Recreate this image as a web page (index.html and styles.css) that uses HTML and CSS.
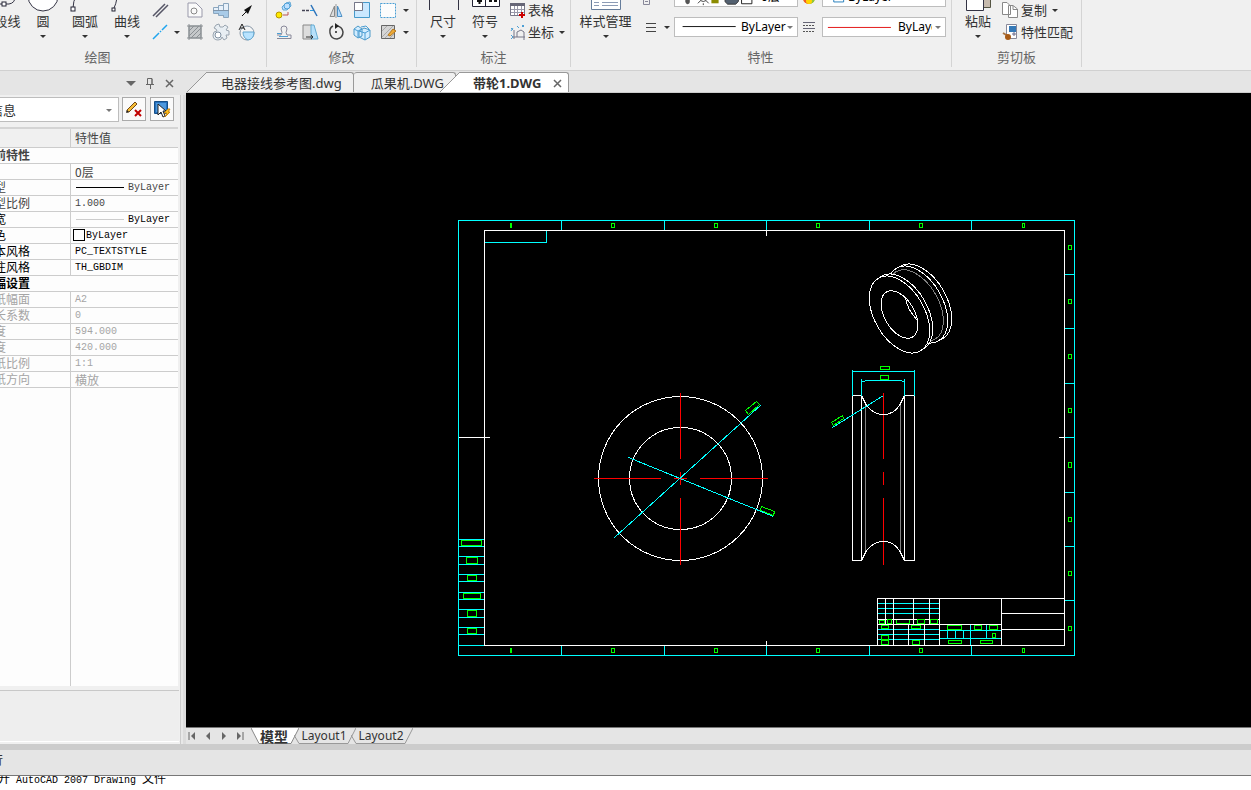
FILE: index.html
```html
<!DOCTYPE html>
<html lang="zh-CN">
<head>
<meta charset="utf-8">
<title>带轮1.DWG</title>
<link rel="stylesheet" href="styles.css">
</head>
<body>
<header class="ribbon">
  <section class="group group-draw">
    <div class="tools">
      <button class="big plain"><svg class="big-icon" viewBox="0 0 32 32"><path d="M2 24H24Q30 23 30 17" class="ink"/><rect x="17" y="22" width="4" height="4" class="node"/></svg><span>多段线</span></button>
      <button class="big"><svg class="big-icon" viewBox="0 0 32 32"><circle cx="16" cy="16" r="15" fill="#fff" stroke="#334"/></svg><span>圆</span><i class="caret"></i></button>
      <button class="big"><svg class="big-icon" viewBox="0 0 32 32"><path d="M4 28Q4 14 18 6" class="ink"/><rect x="2" y="27" width="4" height="4" class="node"/></svg><span>圆弧</span><i class="caret"></i></button>
      <button class="big"><svg class="big-icon" viewBox="0 0 32 32"><path d="M3 28Q7 20 6 8" class="ink"/><rect x="1" y="28" width="3" height="3" class="node"/></svg><span>曲线</span><i class="caret"></i></button>
      <div class="grid grid-draw">
        <button class="tool" aria-label="平行线"><svg viewBox="0 0 18 18"><path d="M2 15L14 3M5 16L17 4" stroke="#556" stroke-width="1.5"/></svg></button>
        <span></span>
        <button class="tool" aria-label="面域"><svg viewBox="0 0 18 18"><path d="M2 2H10L16 8V16H2Z" fill="#fafafa" stroke="#99a"/><circle cx="8" cy="10" r="3" class="grayline"/></svg></button>
        <button class="tool" aria-label="螺栓"><svg viewBox="0 0 18 18"><path d="M1.500 6.500H6.500V12.500H1.500ZM6.500 4.500H11.500V14.500H6.500ZM11.500 2.500H16.500V16.500H11.500Z" fill="#e8f1fa" stroke="#8ba6be"/><path d="M2 10H16V16H12V14H7V12H2Z" fill="#a9cbe8"/><path d="M1 9.500H17" stroke="#8095aa"/></svg></button>
        <button class="tool" aria-label="箭头"><svg viewBox="0 0 18 18"><path d="M4 15L10 9" stroke="#111"/><path d="M14 4L6 9L10 13Z" fill="#111"/></svg></button>
        <button class="tool" aria-label="直线"><svg viewBox="0 0 18 18"><path d="M2 16L8 10M9 9L10 8M11 7L16 2" stroke="#20a5ee" stroke-width="1.5"/></svg></button>
        <button class="more" aria-label="更多直线"><i class="caret"></i></button>
        <button class="tool" aria-label="填充"><svg viewBox="0 0 18 18"><path d="M3 3H15V15H3Z" fill="#c5c8ca" stroke="#858b90"/><path d="M1 3H17M1 15H17M3 1V17M15 1V17M3 8L8 3M3 13L13 3M5 15L15 5M10 15L15 10" stroke="#8b9094"/></svg></button>
        <button class="tool" aria-label="齿轮"><svg viewBox="0 0 18 18"><path d="M4 2L7 1L8 4L11 4L13 2L16 4L14 7L17 8V12H14L15 15L12 17L10 14Q10 17 6 17Q1 17 1 12L2 9L5 8L4 6L2 5Z" fill="#e8eef3" stroke="#9aa5b0"/><circle cx="6" cy="12" r="3" fill="#fff" stroke="#8090a0"/></svg></button>
        <button class="tool" aria-label="局部放大"><svg viewBox="0 0 18 18"><circle cx="9" cy="10" r="7" fill="#f5f5f5" stroke="#8796a5"/><path d="M5 9H16Q16 16 10 17Q5 15 5 9Z" fill="#b8e3ff" stroke="#62a7d0"/><path d="M1 7L4 1L7 7M2 5H6" stroke="#222"/></svg></button>
      </div>
    </div>
    <h2>绘图</h2>
  </section>
  <section class="group group-modify">
    <div class="tools">
      <div class="grid grid-modify">
        <button class="tool" aria-label="复制对象"><svg viewBox="0 0 18 18"><path d="M7 6L11 2L15 1L16 5L12 9L8 9Z" fill="#bddfff" stroke="#62a7d5"/><circle cx="12" cy="5" r="3" class="blueline"/><circle cx="4" cy="14" r="3" fill="#ffea00" stroke="#b59500"/><path d="M8 14H13V11" stroke="#b55"/></svg></button>
        <button class="tool" aria-label="延伸"><svg viewBox="0 0 18 18"><path d="M1 9.500H4M5 9.500H8" stroke="#445" stroke-width="1.5"/><path d="M9 9.500H13" stroke="#2b9ae0"/><path d="M10 4L16 15" stroke="#2b73bb" stroke-width="1.5"/></svg></button>
        <button class="tool" aria-label="镜像"><svg viewBox="0 0 18 18"><path d="M7.500 5V15.500H3Z" fill="#ddd" stroke="#888"/><path d="M10.500 5V15.500H15Z" fill="#b7dcff" stroke="#4e91c5"/><path d="M9 3V17" stroke="#999"/></svg></button>
        <button class="tool" aria-label="缩放"><svg viewBox="0 0 18 18"><path d="M1.500 1.500H16.500V16.500H1.500Z" fill="#cae8ff" stroke="#469acb"/><path d="M1.500 1.500H9.500V9.500H1.500Z" fill="#fff" stroke="#778"/></svg></button>
        <button class="tool" aria-label="选择框"><svg viewBox="0 0 18 18"><path d="M1.500 2.500H16.500V16.500H1.500Z" fill="#fcfcfc" stroke="#4a9fd4" stroke-dasharray="2 1"/></svg></button>
        <button class="more" aria-label="更多选择"><i class="caret"></i></button>
        <button class="tool" aria-label="偏移"><svg viewBox="0 0 18 18"><path d="M2 15.500H16V12H12Q10 10 12 6Q12 3 9 3Q6 3 6 6Q8 10 6 12H2" stroke="#889"/><path d="M2 10.500H6M4 13.500H13" class="blueline"/></svg></button>
        <button class="tool" aria-label="拉伸"><svg viewBox="0 0 18 18"><path d="M2 2H11V16H2Z" fill="#ddd" stroke="#888"/><path d="M10 2H13L17 16H10Z" fill="#b6e0fa" stroke="#64acd3"/><path d="M5 14H12M10 12L12 14L10 16" stroke="#333"/></svg></button>
        <button class="tool" aria-label="旋转"><svg viewBox="0 0 18 18"><path d="M6 3Q2 5 3 10Q4 16 10 16Q16 15 16 9Q15 3 9 3" stroke="#444" stroke-width="1.5"/><path d="M8 0L12 3L8 6Z" fill="#222"/><circle cx="9" cy="9" r="1" fill="#222"/></svg></button>
        <button class="tool" aria-label="阵列"><svg viewBox="0 0 18 18"><path d="M1 6L5 3L9 6V13L5 15L1 12ZM6 8L11 5L17 7V14L12 17L6 14Z" fill="#d3edff" stroke="#4c99c8"/><path d="M1 6L5 8V15M5 8L9 6M6 8L12 10V17M12 10L17 7M8 4L13 3L16 6" class="blueline"/></svg></button>
        <button class="tool" aria-label="编辑填充"><svg viewBox="0 0 18 18"><path d="M2.500 2.500H15.500V15.500H2.500Z" fill="#d5d5d5" stroke="#666"/><path d="M3 8L8 3M3 14L14 3M6 15L15 6M11 15L15 11" stroke="#aaa"/><path d="M9 12L14 6L17 8L11 13Z" fill="#eeaa35" stroke="#b47820"/></svg></button>
        <button class="more" aria-label="更多编辑"><i class="caret"></i></button>
      </div>
    </div>
    <h2>修改</h2>
  </section>
  <section class="group group-note">
    <div class="tools">
      <button class="big"><svg class="big-icon" viewBox="0 0 32 32"><path d="M2.500 2V30M31.500 2V30M3 14H31" class="ink"/></svg><span>尺寸</span><i class="caret"></i></button>
      <button class="big"><svg class="big-icon" viewBox="0 0 32 32"><path d="M3.500 4.500H30.500V26.500H3.500ZM16.500 5V26" fill="#fff" stroke="#223"/><path d="M8 21H13M10.500 19V24M20 21H23M25 21H28" stroke="#111" stroke-width="2"/></svg><span>符号</span><i class="caret"></i></button>
      <div class="grid grid-note">
        <button class="wide"><svg viewBox="0 0 18 18"><path d="M1.500 2.500H15.500V14.500H1.500Z" fill="#fff" stroke="#778"/><path d="M1 2H16V5H1Z" fill="#667"/><path d="M2 8.500H15M2 11.500H15M5.500 5V14M8.500 5V14M12.500 5V14" stroke="#99a"/><path d="M10 14H16M13 11V17" stroke="#c00" stroke-width="2"/></svg><span>表格</span></button>
        <button class="wide"><svg viewBox="0 0 18 18"><path d="M5 16V7M3 14H16M8 14V9L12 7L15 9V17" stroke="#778"/><path d="M2 5L4 7M4 5L2 8M8 3L10 5M13 2L15 4M15 2L13 4M2 12L4 14L2 16" class="blueline"/></svg><span>坐标</span><i class="caret"></i></button>
      </div>
    </div>
    <h2>标注</h2>
  </section>
  <section class="group group-props">
    <div class="tools">
      <button class="big style-btn"><svg class="big-icon" viewBox="0 0 32 32"><path d="M1.500 2.500H30.500V29.500H1.500Z" fill="#fff" stroke="#667d9b"/><path d="M4 22.500H9M12 22.500H28M4 25.500H9M12 25.500H28" stroke="#8c9bb5"/></svg><span>样式管理</span><i class="caret"></i></button>
      <div class="props">
        <span class="mark"><svg viewBox="0 0 18 18"><path d="M2.500 4.500H8.500V16.500H2.500ZM4 11.500H7M4 13.500H7" stroke="#889"/></svg></span>
        <span></span>
        <div class="combo"><svg class="layer-mark" viewBox="0 0 80 20"><path d="M7 4H12V15Q12 18 9 18Q7 17 7 15Z" fill="#555"/><path d="M21 17L24 14M33 17L30 14M27 17V19" stroke="#333"/><circle cx="27" cy="11" r="4" fill="#fff" stroke="#333"/><path d="M36 9H44V17H36Z" fill="#8b8b00"/><path d="M52 9H66V15L63 18H54L51 15Z" fill="#536070" stroke="#333"/><path d="M69.500 5.500H81V17.500H69.500Z" fill="#fff" stroke="#111"/></svg><select class="layer-select" aria-label="图层"><option>0层</option></select></div>
        <span class="mark"><svg viewBox="0 0 18 18"><circle cx="8" cy="10" r="6" fill="#e8be22"/><path d="M2 10A6 6 0 0 0 8 16V10Z" fill="#f05a28"/><path d="M8 16A6 6 0 0 0 14 10H8Z" fill="#8dc63f"/><circle cx="8" cy="13" r="3" fill="#ffd400"/></svg></span>
        <div class="combo"><svg class="line-mark" viewBox="0 0 80 20"><path d="M7.500 6.500H18.500V15.500H7.500Z" fill="#fff" stroke="#1675b8"/></svg><select class="color-select" aria-label="颜色"><option>ByLayer</option></select></div>
        <span class="mark"><svg viewBox="0 0 18 18"><path d="M5 5.500H15M5 9.500H15M5 13.500H15" stroke="#444"/></svg></span>
        <i class="caret"></i>
        <div class="combo"><svg class="line-mark" viewBox="0 0 80 20"><path d="M4 9.500H63" stroke="#000"/></svg><select class="linetype-select" aria-label="线型"><option>ByLayer</option></select></div>
        <span class="mark"><svg viewBox="0 0 18 18"><path d="M2 4.500H14M2 10.500H14" stroke="#667"/><path d="M2 7.500H14M2 13.500H14" stroke="#555" stroke-dasharray="2 1"/></svg></span>
        <div class="combo"><svg class="line-mark" viewBox="0 0 80 20"><path d="M1 10.500H71" stroke="#e00000"/></svg><select class="weight-select" aria-label="线宽"><option>ByLayer</option></select></div>
      </div>
    </div>
    <h2>特性</h2>
  </section>
  <section class="group group-clip">
    <div class="tools">
      <button class="big"><svg class="big-icon" viewBox="0 0 32 32"><path d="M15.500 3.500H28.500V27.500H15.500Z" fill="#c7bbae" stroke="#554"/><path d="M4.500 7.500H21.500V30.500H4.500Z" fill="#fff" stroke="#334"/></svg><span>粘贴</span><i class="caret"></i></button>
      <div class="grid grid-note">
        <button class="wide"><svg viewBox="0 0 18 18"><path d="M.5 1.500H5L8.500 5V13.500H.5ZM6.500 4.500H11L15.500 8V16.500H6.500Z" fill="#fff" stroke="#888"/><path d="M11 5V8.500H15" class="grayline"/></svg><span>复制</span><i class="caret"></i></button>
        <button class="wide"><svg viewBox="0 0 18 18"><path d="M4.500 1.500H14.500V15.500H4.500Z" fill="#fff" stroke="#889"/><path d="M7 3H14V9H7Z" fill="#3579b7"/><path d="M10 11H14M12 9V13" stroke="#668"/><path d="M1 10L6 13" stroke="#a87543" stroke-width="2"/><circle cx="6" cy="14" r="3" fill="#a85b16"/></svg><span>特性匹配</span></button>
      </div>
    </div>
    <h2>剪切板</h2>
  </section>
</header>

<main class="workspace">
  <aside class="panel">
    <div class="panel-bar">
      <button aria-label="菜单"><svg viewBox="0 0 12 12"><path d="M1 4H11L6 9Z" fill="#666"/></svg></button>
      <button aria-label="固定"><svg viewBox="0 0 12 12"><path d="M3.500 7V1.500H8V7M2 7.500H10M6.500 8V12M8 2V7" stroke="#666"/></svg></button>
      <button aria-label="关闭面板"><svg viewBox="0 0 12 12"><path d="M3 3L10 10M10 3L3 10" stroke="#666" stroke-width="1.500"/></svg></button>
    </div>
    <div class="panel-search">
      <div class="combo object-combo"><select aria-label="对象"><option>默认信息</option></select></div>
      <button class="square" aria-label="清除选择"><svg viewBox="0 0 18 18"><path d="M2 10L10 2L12 4L4 12L2 12Z" fill="#f6bd36" stroke="#704919"/><path d="M1 13L2 10L4 12Z" fill="#222"/><path d="M10 10L16 16M16 10L10 16" stroke="#c00000" stroke-width="2"/></svg></button>
      <button class="square" aria-label="快速选择"><svg viewBox="0 0 18 18"><path d="M1.500 1.500H14.500V13.500H1.500Z" fill="#2671bd" stroke="#174f87"/><path d="M3 3H13V12H3Z" fill="#4d98dd"/><path d="M5 4V15L8 12L10 17L12 16L10 11H13Z" fill="#fff" stroke="#222"/><path d="M15 9L11 13H14L12 17L17 12H15L17 9Z" fill="#ffc31c" stroke="#c98510"/></svg></button>
    </div>
    <div class="sheet">
      <table>
        <thead><tr><th>特性名</th><th>特性值</th></tr></thead>
        <tbody>
          <tr class="section"><th colspan="2">当前特性</th></tr>
          <tr><td>层</td><td class="cn">0层</td></tr>
          <tr><td>线型</td><td><span class="sample"><i class="rule"></i>ByLayer</span></td></tr>
          <tr><td>线型比例</td><td>1.000</td></tr>
          <tr class="strong"><td>线宽</td><td><span class="sample"><i class="rule pale"></i>ByLayer</span></td></tr>
          <tr class="strong"><td>颜色</td><td class="swatch-cell"><i class="swatch"></i>ByLayer</td></tr>
          <tr class="strong"><td>文本风格</td><td>PC_TEXTSTYLE</td></tr>
          <tr class="strong"><td>标注风格</td><td>TH_GBDIM</td></tr>
          <tr class="section strong"><th colspan="2">图幅设置</th></tr>
          <tr class="dim"><td>图纸幅面</td><td>A2</td></tr>
          <tr class="dim"><td>加长系数</td><td>0</td></tr>
          <tr class="dim"><td>宽度</td><td>594.000</td></tr>
          <tr class="dim"><td>高度</td><td>420.000</td></tr>
          <tr class="dim"><td>图纸比例</td><td>1:1</td></tr>
          <tr class="dim"><td>图纸方向</td><td class="cn">横放</td></tr>
        </tbody>
      </table>
      <div class="sheet-rest"></div>
    </div>
    <div class="hint"></div>
  </aside>

  <section class="document">
    <nav class="doc-tabs">
      <button class="doc-tab first"><svg class="slant" viewBox="0 0 20 20"><path d="M0 20L20 0V20Z" fill="#f0f0f0"/><path d="M0 20L20 0" stroke="#999"/></svg><span>电器接线参考图.dwg</span></button>
      <button class="doc-tab second"><span>瓜果机.DWG</span></button>
      <button class="doc-tab active"><svg class="slant" viewBox="0 0 20 20"><path d="M0 20L20 0V20Z" fill="#fff"/><path d="M0 20L20 0" stroke="#999"/></svg><span>带轮1.DWG<svg class="close" viewBox="0 0 10 10"><path d="M1 2L8 9M8 2L1 9" stroke="#666" stroke-width="1.500"/></svg></span></button>
    </nav>
    <div class="canvas">
      <svg viewBox="186 93 1065 634" shape-rendering="crispEdges">
        <g transform="translate(.5 .5)">
          <g class="cyan">
            <path d="M458 220H1074V655H458ZM561 220V230M664 220V230M766 220V230M869 220V230M971 220V230M561 645V655M664 645V655M766 645V655M869 645V655M971 645V655"/>
            <path d="M1064 274H1074M1064 328H1074M1064 383H1074M1064 437H1074M1064 492H1074M1064 546H1074M1064 600H1074"/>
            <path d="M458 539H484M458 546H484M458 556H484M458 564H484M458 574H484M458 581H484M458 592H484M458 599H484M458 609H484M458 617H484M458 627H484M458 634H484M458 645H484M484 242H546V230"/>
            <path d="M877 603H939M877 608H939M877 613H939M877 629H939M877 634H939M877 639H939M939 630H1001M939 638H1001M947 630V638M955 630V638M963 630V638M970 624V645M986 624V638"/>
          </g>
          <path class="white" d="M484 230H1064V645H484ZM766 230V235M766 640V645M458 437H489M1058 437H1064M877 645V598H1064M885 598V624M893 598V645M913 598V624M929 598V624M939 598V645M1001 598V645M908 624V645M924 624V645M877 619H939M877 624H1001M1001 613H1064M1001 629H1064"/>
          <g class="green">
            <path d="M510 223H511V227H510ZM611 223H614V227H611ZM714 223H717V227H714ZM816 223H819V227H816ZM919 223H922V227H919ZM1022 223H1024V227H1022Z"/>
            <path d="M510 648H511V652H510ZM611 648H614V652H611ZM714 648H717V652H714ZM816 648H819V652H816ZM919 648H922V652H919ZM1022 648H1024V652H1022Z"/>
            <path d="M1068 245H1071V249H1068ZM1068 299H1071V303H1068ZM1068 354H1071V358H1068ZM1068 408H1071V412H1068ZM1068 462H1071V467H1068ZM1068 517H1071V521H1068ZM1068 571H1071V575H1068ZM1068 626H1071V630H1068Z"/>
            <path d="M461 540H481V545H461ZM466 557H477V563H466ZM467 575H476V580H467ZM463 593H480V598H463ZM467 610H476V616H467ZM467 628H476V633H467Z"/>
            <path d="M879 620H884V623H879ZM887 619H891V623H887ZM896 619V623H909V619M917 619H924V623H917ZM930 619H937V623H930ZM881 625H888V628H881ZM911 625H920V628H911ZM881 635H888V639H881ZM881 640H888V644H881ZM912 640H919V644H912Z"/>
            <path d="M947 625H961V629H947ZM974 625H981V629H974ZM989 625H997V629H989ZM992 633H995V637H992ZM948 640H961V643H948ZM980 640H992V643H980Z"/>
            <path d="M880 366H889V369H880ZM880 375H888V379H880ZM745 410L756 401L759 404L748 414ZM761 506L774 511L773 515L760 510ZM831 422L842 415L843 418L833 425Z"/>
          </g>
          <circle class="white" cx="680" cy="478" r="82"/>
          <circle class="white" cx="680" cy="478" r="51"/>
          <path class="red" d="M680 392V458M680 471V484M680 497V564M593 478H660M673 478H686M699 478H767"/>
          <path class="cyan" d="M614 537L761 404M628 457L773 516"/>
          <path class="dark" d="M865 402V553M900 402V553"/>
          <path class="red" d="M883 392V458M883 471V484M883 497V564"/>
          <path class="white" d="M852 395H861V560H852ZM904 395H914V560H904ZM861 395L866 405Q873 414 883 414Q893 414 899 405L904 395M861 560L866 550Q873 541 883 541Q893 541 899 550L904 560"/>
          <path class="cyan" d="M852 369V395M914 369V395M852 371H914M861 378V395M904 378V395M861 381H864M864 380H901M901 381H904M883 395L832 427"/>
          <g class="solid">
            <ellipse rx="42" ry="25" transform="translate(921 302) rotate(60)"/>
            <ellipse rx="42" ry="25" transform="translate(917 304) rotate(60)"/>
            <ellipse class="dim-edge" rx="39" ry="23" transform="translate(915 305) rotate(60)"/>
            <ellipse rx="42" ry="25" transform="translate(902 312) rotate(60)"/>
            <ellipse rx="42" ry="25" transform="translate(899 314) rotate(60)"/>
            <ellipse rx="26" ry="15" transform="translate(899 314) rotate(60)"/>
            <path d="M905 297Q906 308 917 320"/>
          </g>
        </g>
      </svg>
    </div>
    <nav class="layout-tabs">
      <button class="step" aria-label="第一个"><svg viewBox="0 0 10 10"><path d="M2 1V9" stroke="#666"/><path d="M8 1V9L4 5Z" fill="#666"/></svg></button>
      <button class="step" aria-label="上一个"><svg viewBox="0 0 10 10"><path d="M7 1V9L3 5Z" fill="#666"/></svg></button>
      <button class="step" aria-label="下一个"><svg viewBox="0 0 10 10"><path d="M3 1V9L7 5Z" fill="#666"/></svg></button>
      <button class="step" aria-label="最后一个"><svg viewBox="0 0 10 10"><path d="M8 1V9" stroke="#666"/><path d="M2 1V9L6 5Z" fill="#666"/></svg></button>
      <button class="sheet-tab current"><svg viewBox="0 0 48 16" preserveAspectRatio="none"><path d="M0 0L8 15.500H40L48 0" fill="#fff" stroke="#888"/></svg><span>模型</span></button>
      <button class="sheet-tab"><svg viewBox="0 0 62 16" preserveAspectRatio="none"><path d="M0 7L5 15.500H54L62 0" stroke="#999"/></svg><span>Layout1</span></button>
      <button class="sheet-tab"><svg viewBox="0 0 62 16" preserveAspectRatio="none"><path d="M0 7L5 15.500H54L62 0" stroke="#999"/></svg><span>Layout2</span></button>
    </nav>
  </section>
</main>

<footer class="command">
  <div class="command-bar"><span>命令行</span></div>
  <div class="command-log"><p><span>打开</span> AutoCAD 2007 Drawing <span>文件</span></p></div>
</footer>
</body>
</html>
```
FILE: styles.css
```css
* { box-sizing: border-box; }
body {
  margin: 0;
  height: 100vh;
  display: flex;
  flex-direction: column;
  overflow: hidden;
  background: #e5e5e5;
  color: #333;
  font: 13px/18px "Noto Sans", "Noto Sans CJK SC", sans-serif;
}
button, select {
  margin: 0;
  padding: 0;
  border: 0;
  background: none;
  color: inherit;
  font: inherit;
}
svg { display: block; fill: none; }
.caret {
  border: 3px solid transparent;
  border-top-color: #333;
  border-bottom: 0;
  width: 6px;
  height: 3px;
}

.ribbon {
  display: flex;
  align-items: flex-end;
  flex: none;
  height: 71px;
  overflow: hidden;
  background: #f0f0f0;
  border-bottom: 1px solid #d0d0d0;
}
.group {
  flex: none;
  margin-bottom: 3px;
  border-right: 1px solid #d4d4d4;
}
.group h2 {
  margin: 4px 0 0;
  font-size: 13px;
  font-weight: 400;
  line-height: 20px;
  text-align: center;
  color: #666;
}
.tools { display: flex; align-items: flex-end; }
.group-draw { margin-left: -71px; }
.group-draw .tools { padding: 0 6px 0 51px; }
.group-modify .tools { padding: 0 5px 0 4px; }
.group-note { padding: 0 5px; }
.group-props { padding: 0 5px 0 4px; }
.group-clip .tools { padding: 0 8px 0 5px; }
.big {
  display: flex;
  flex-direction: column;
  align-items: center;
  width: 42px;
  height: 63px;
  white-space: nowrap;
}
.big .caret { margin-top: 5px; }
.big.plain { justify-content: flex-start; }
.big-icon { width: 32px; height: 32px; flex: none; }
.style-btn { width: 61px; }
.ink { stroke: #334; }
.node { fill: #fff; stroke: #223; }
.grayline { stroke: #888; }
.blueline { stroke: #4c9fd5; }
.grid { display: grid; grid-auto-rows: 22px; align-items: center; }
.grid-draw { grid-template-columns: 24px 10px 26px 26px 26px; }
.grid-modify { grid-template-columns: repeat(5, 26px) 10px; }
.grid-note { padding-left: 3px; }
.tool { display: grid; place-items: center; }
.tool svg, .wide svg, .mark svg { width: 18px; height: 18px; }
.more { display: grid; place-items: center; }
.wide { display: flex; align-items: center; gap: 1px; white-space: nowrap; }
.wide .caret { margin-left: 4px; }
.props {
  display: grid;
  grid-template-columns: 28px 10px 124px 24px 124px;
  grid-auto-rows: 20px;
  row-gap: 10px;
  align-items: center;
  padding-bottom: 6px;
}
.mark { display: grid; place-items: center; }

.combo {
  position: relative;
  height: 20px;
  border: 1px solid #bdbdbd;
  background: #fff;
}
.combo::after {
  content: "";
  position: absolute;
  right: 4px;
  top: 8px;
  border: 3px solid transparent;
  border-top-color: #777;
  border-bottom: 0;
}
.combo > svg { position: absolute; left: 0; top: 0; width: 80px; height: 18px; }
.combo select {
  appearance: none;
  display: block;
  width: 100%;
  height: 100%;
  padding: 0 10px 0 66px;
  font-size: 12px;
  color: #000;
}
.combo .layer-select { padding-left: 86px; }
.combo .color-select { padding-left: 25px; }
.combo .weight-select { padding-left: 75px; padding-right: 13px; }

.workspace { display: flex; flex: 1; min-height: 0; }
.panel {
  display: flex;
  flex-direction: column;
  flex: none;
  width: 186px;
  padding: 0 6px 2px 0;
  overflow: hidden;
  background: linear-gradient(to left, #dcdcdc 3px, #e8e8e8 3px, #e8e8e8 5px, #ccc 5px, #ccc 6px, #f0f0f0 6px);
}
.panel-bar {
  display: flex;
  justify-content: flex-end;
  align-items: center;
  gap: 7px;
  height: 24px;
  margin-right: -6px;
  padding-right: 11px;
  background: #e5e5e5;
}
.panel-bar svg { width: 12px; height: 12px; }
.panel-search {
  display: flex;
  align-items: flex-start;
  gap: 4px;
  height: 32px;
  padding: 2px 6px 0 0;
}
.object-combo { flex: 1; height: 25px; margin: 0 -1px 0 -40px; }
.object-combo::after { top: 11px; right: 6px; }
.object-combo select { padding: 0 14px 0 3px; font-size: 13px; color: #333; }
.square {
  display: grid;
  place-items: center;
  width: 24px;
  height: 24px;
  border: 1px solid #aaa;
  background: #fafafa;
}
.square svg { width: 18px; height: 18px; }
.sheet {
  display: flex;
  flex-direction: column;
  flex: 1;
  margin-left: -40px;
  margin-right: 2px;
  border-top: 2px solid #d4d4d4;
  background: #fdfdfd;
}
.panel table {
  width: 100%;
  table-layout: fixed;
  border-collapse: separate;
  border-spacing: 0;
  font-size: 12px;
  line-height: 15px;
  color: #444;
}
.panel td, .panel tbody th {
  height: 16px;
  padding: 0 0 0 22px;
  border-bottom: 1px solid #ccc;
  text-align: left;
  white-space: nowrap;
}
.panel thead th {
  height: 19px;
  padding: 0 0 0 4px;
  background: #f0f0f0;
  border-bottom: 1px solid #ccc;
  font-weight: 400;
  text-align: left;
}
.panel th:first-child { width: 111px; }
.panel td:first-child, .panel thead th:first-child { border-right: 1px solid #ccc; }
.panel td + td {
  padding-left: 4px;
  font-family: "Liberation Mono", "Noto Sans CJK SC", monospace;
  font-size: 10px;
}
.panel td.cn { font-family: "Noto Sans CJK SC", sans-serif; font-size: 12px; line-height: 14px; }
.panel .strong { color: #000; }
.panel .dim { color: #a5a5a5; }
.sample { display: flex; align-items: center; gap: 4px; padding-left: 1px; }
.rule { width: 48px; height: 1px; background: #000; }
.rule.pale { background: #ccc; }
.panel td.swatch-cell { padding-left: 2px; }
.swatch {
  display: inline-block;
  width: 12px;
  height: 12px;
  margin-right: 1px;
  border: 1px solid #000;
  background: #fff;
  vertical-align: middle;
}
.sheet-rest { flex: 1; width: 111px; border-right: 1px solid #ccc; }
.hint {
  height: 56px;
  margin-right: 1px;
  border-top: 4px solid #f0f0f0;
  border-bottom: 1px solid #fff;
  background: #eee;
  box-shadow: inset 0 1px #c8c8c8;
}

.document { display: flex; flex-direction: column; flex: 1; min-width: 0; }
.doc-tabs {
  display: flex;
  align-items: flex-end;
  height: 22px;
  padding-left: 1px;
  border-bottom: 1px solid #ccc;
}
.doc-tab { display: flex; height: 20px; }
.doc-tab > span {
  display: flex;
  align-items: center;
  height: 20px;
  padding: 0 11px 0 14px;
  border-top: 1px solid #999;
  border-right: 1px solid #999;
  border-radius: 0 3px 0 0;
  background: #f0f0f0;
}
.doc-tab.second > span { padding-left: 17px; border-radius: 3px 3px 0 0; }
.doc-tab.active { margin-left: -16px; position: relative; }
.doc-tab.active > span { padding: 0 5px 0 13px; background: #fff; font-weight: 700; }
.slant { width: 20px; height: 20px; }
.close { width: 10px; height: 10px; margin-left: 12px; }
.canvas { flex: 1; min-height: 0; background: #000; }
.canvas svg { width: 100%; height: 100%; }
.white { stroke: #fff; }
.cyan { stroke: #0ff; }
.green { stroke: #0f0; }
.red { stroke: #f00; }
.dark { stroke: #808080; }
.solid { fill: #000; stroke: #fff; }
.solid .dim-edge { stroke: #808080; }

.layout-tabs {
  display: flex;
  align-items: flex-start;
  height: 17px;
  padding-left: 1px;
  border-top: 1px solid #777;
}
.step { width: 16px; height: 16px; display: grid; place-items: center start; }
.step svg { width: 10px; height: 10px; }
.sheet-tab {
  position: relative;
  height: 16px;
  width: 62px;
  margin-left: -5px;
  font-size: 12px;
  line-height: 14px;
}
.sheet-tab svg { position: absolute; inset: 0; width: 100%; height: 100%; }
.sheet-tab span { position: relative; display: block; padding-right: 2px; }
.sheet-tab.current { width: 48px; margin-left: 0; font-size: 14px; font-weight: 700; line-height: 13px; }

.command { flex: none; border-top: 6px solid #ccc; }
.command-bar {
  height: 26px;
  border-bottom: 1px solid #777;
  font-size: 12px;
  line-height: 21px;
}
.command-bar span { display: block; margin-left: -33px; }
.command-log { height: 14px; overflow: hidden; background: #fff; }
.command-log p {
  margin: -7px 0 0 -14px;
  font: 10px/18px "Liberation Mono", monospace;
  color: #000;
  white-space: nowrap;
}
.command-log p span { font: 12px/18px "Noto Sans CJK SC", sans-serif; }
```
